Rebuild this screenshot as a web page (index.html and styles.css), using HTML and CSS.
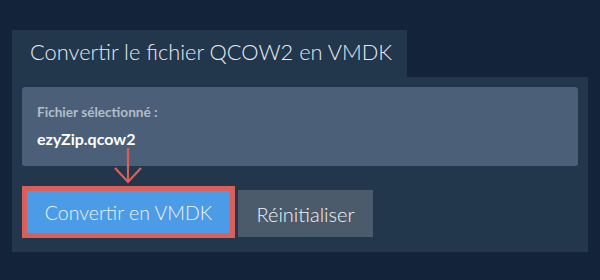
FILE: index.html
```html
<!DOCTYPE html>
<html lang="fr">
<head>
<meta charset="utf-8">
<link rel="stylesheet" href="styles.css">
</head>
<body>
<div class="wrap">
  <div class="tab">Convertir le fichier QCOW2 en VMDK</div>
  <div class="panel">
    <div class="file-box">
      <div class="label">Fichier sélectionné :</div>
      <div class="filename">ezyZip.qcow2</div>
    </div>
    <div class="arrow-row">
      <svg class="arrow" width="30" height="36" viewBox="0 0 30 36">
        <path d="M14 0 V34 M1 20 L14 34 L27 20" fill="none" stroke="#d9605a" stroke-width="2.2"/>
      </svg>
    </div>
    <div class="actions">
      <button class="btn btn-convert">Convertir en VMDK</button>
      <button class="btn btn-reset">Réinitialiser</button>
    </div>
  </div>
</div>
</body>
</html>
```
FILE: styles.css
```css
html, body {
  margin: 0;
  padding: 0;
  background: #12233a;
}
body {
  font-family: Lato, "Liberation Sans", sans-serif;
  width: 600px;
  height: 280px;
  overflow: hidden;
}
.wrap {
  padding: 30px 12px 0 12px;
}
.tab {
  display: inline-block;
  background: #22364c;
  color: #e6ebf1;
  font-size: 21.8px;
  font-weight: 300;
  height: 47px;
  line-height: 44px;
  padding: 0 0 0 18px;
  box-sizing: border-box;
  width: 395px;
  white-space: nowrap;
  vertical-align: top;
}
.panel {
  background: #22364c;
  padding: 10px 10px 14px 10px;
  height: 175px;
  box-sizing: border-box;
}
.file-box {
  background: #4b6078;
  border-radius: 3px;
  height: 79px;
  box-sizing: border-box;
  padding: 17px 15px 0 15px;
}
.label {
  color: #b2bdca;
  font-size: 13.6px;
  font-weight: 700;
  line-height: 16px;
}
.filename {
  color: #ffffff;
  font-size: 16px;
  font-weight: 700;
  line-height: 20px;
  margin-top: 9px;
}
.arrow-row {
  height: 20px;
  position: relative;
}
.arrow {
  position: absolute;
  left: 92px;
  top: -18px;
}
.actions {
  display: flex;
  align-items: flex-end;
  gap: 3px;
}
.btn {
  font-family: Lato, "Liberation Sans", sans-serif;
  font-size: 19.5px;
  font-weight: 300;
  color: #eef3f8;
  border: none;
  margin: 0;
  box-sizing: border-box;
  cursor: pointer;
}
.btn-convert {
  background: #4c9be6;
  border: 5px solid #d9605a;
  width: 213px;
  height: 52px;
  padding: 0;
}
.btn-reset {
  background: #4c5b6b;
  width: 135px;
  height: 47px;
  margin-bottom: 1px;
  padding: 0;
  font-size: 20px;
}
```
